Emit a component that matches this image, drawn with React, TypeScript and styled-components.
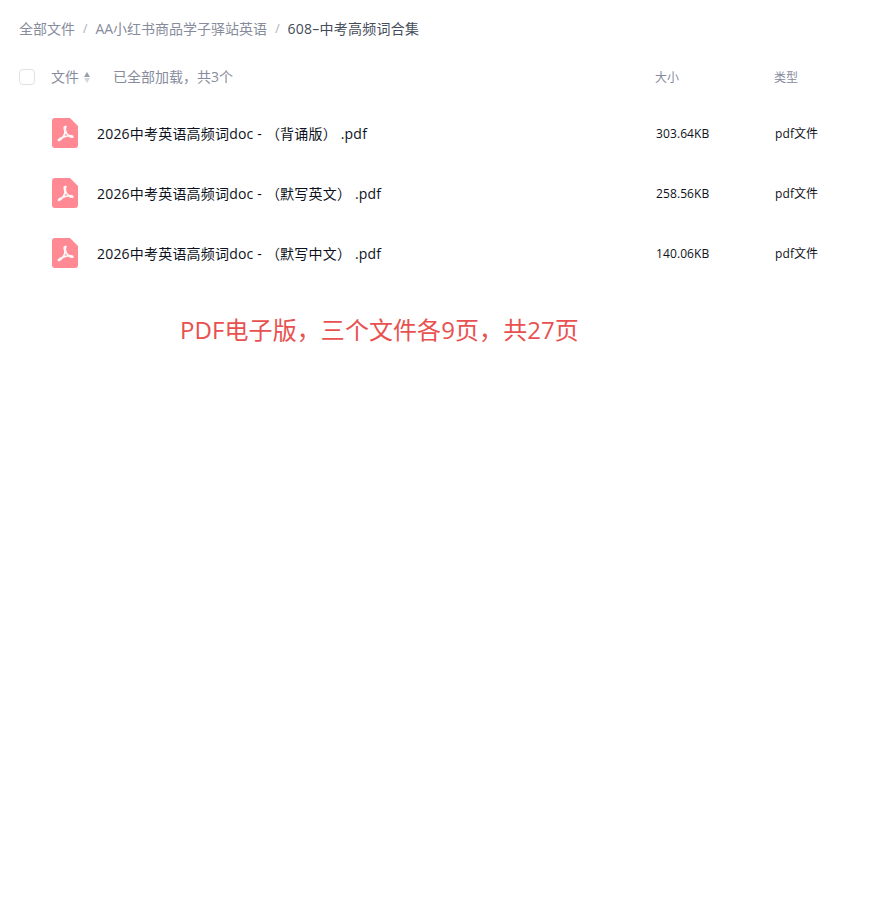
import React from 'react'
import styled, { createGlobalStyle } from 'styled-components'

const files = [
  { name: '2026中考英语高频词doc - （背诵版） .pdf', size: '303.64KB' },
  { name: '2026中考英语高频词doc - （默写英文） .pdf', size: '258.56KB' },
  { name: '2026中考英语高频词doc - （默写中文） .pdf', size: '140.06KB' }
]

const PdfIcon = () => (
  <svg width="26" height="30" viewBox="0 0 26 30">
    <path d="M3 0H18L26 8V27a3 3 0 0 1-3 3H3a3 3 0 0 1-3-3V3a3 3 0 0 1 3-3Z" fill="#ff8a94" />
    <path
      d="M13 8.500c-.9 0-1 1.400-.2 4.200.4 1.300.3 2.100-.4 3.700-1 2.200-2 3.700-3.300 4.800-1 .8-2.300 1.700-2.600 1.100-.3-.6 1-1.500 3-2.400 2.200-1 5.400-2 7.600-2.200 1.800-.1 3.900.3 3.800 1.100-.1.800-2.100.500-3.600-.5-1.700-1.200-3.100-3-3.700-5.200-.5-2-.2-4.600.4-4.600Z"
      fill="none"
      stroke="#fff"
      strokeWidth="1.700"
      strokeLinejoin="round"
      opacity="0.92"
    />
  </svg>
)

const App = () => (
  <Page>
    <GlobalStyle />
    <Breadcrumb>
      <Crumb>全部文件</Crumb>
      <Separator>/</Separator>
      <Crumb>AA小红书商品学子驿站英语</Crumb>
      <Separator>/</Separator>
      <Crumb $current>608–中考高频词合集</Crumb>
    </Breadcrumb>

    <HeaderRow>
      <Checkbox />
      <NameHead>
        <NameLabel>文件</NameLabel>
        <SortIcon>
          <SortUp />
          <SortDown />
        </SortIcon>
        <LoadedText>已全部加载，共3个</LoadedText>
      </NameHead>
      <HeadLabel>大小</HeadLabel>
      <HeadLabel>类型</HeadLabel>
    </HeaderRow>

    <FileList>
      {files.map((file) => (
        <FileRow key={file.name}>
          <IconCell>
            <PdfIcon />
          </IconCell>
          <FileName>{file.name}</FileName>
          <MetaCell>{file.size}</MetaCell>
          <MetaCell>pdf文件</MetaCell>
        </FileRow>
      ))}
    </FileList>

    <Note>PDF电子版，三个文件各9页，共27页</Note>
  </Page>
)

const GlobalStyle = createGlobalStyle`
  html, body {
    margin: 0;
    padding: 0;
    background: #fff;
  }
`

const Page = styled.div`
  width: 872px;
  height: 909px;
  padding: 19px 0 0 19px;
  box-sizing: border-box;
  font-family: "Open Sans", "Noto Sans CJK SC", sans-serif;
`

const Breadcrumb = styled.div`
  display: flex;
  align-items: center;
  height: 20px;
  font-size: 14px;
  line-height: 20px;
`

const Crumb = styled.span<{ $current?: boolean }>`
  color: ${(p) => (p.$current ? '#454d5a' : '#878c9c')};
  letter-spacing: ${(p) => (p.$current ? '0.25px' : '0')};
`

const Separator = styled.span`
  margin: 0 8px;
  font-size: 12px;
  color: #a8acb8;
`

const HeaderRow = styled.div`
  display: grid;
  grid-template-columns: 32px 604px 119px 1fr;
  align-items: center;
  height: 20px;
  margin-top: 28px;
`

const Checkbox = styled.div`
  width: 16px;
  height: 16px;
  border: 1px solid #dfe1e6;
  border-radius: 4px;
  box-sizing: border-box;
`

const NameHead = styled.div`
  display: flex;
  align-items: center;
`

const HeadLabel = styled.span`
  padding-top: 2px;
  font-size: 12px;
  line-height: 18px;
  color: #878c9c;
`

const NameLabel = styled.span`
  font-size: 14px;
  line-height: 18px;
  color: #878c9c;
`

const SortIcon = styled.span`
  display: flex;
  flex-direction: column;
  gap: 1px;
  margin-left: 5px;
`

const SortUp = styled.i`
  width: 0;
  height: 0;
  border-left: 3px solid transparent;
  border-right: 3px solid transparent;
  border-bottom: 5px solid #9a9eab;
`

const SortDown = styled.i`
  width: 0;
  height: 0;
  border-left: 3px solid transparent;
  border-right: 3px solid transparent;
  border-top: 5px solid #d5d7de;
`

const LoadedText = styled.span`
  margin-left: 23px;
  font-size: 14px;
  line-height: 18px;
  color: #878c9c;
`

const FileList = styled.div`
  margin-top: 16px;
`

const FileRow = styled.div`
  display: grid;
  grid-template-columns: 78px 559px 119px 1fr;
  align-items: center;
  height: 60px;
`

const IconCell = styled.div`
  display: flex;
  padding-left: 33px;
`

const FileName = styled.span`
  padding-top: 2px;
  font-size: 14px;
  line-height: 20px;
  letter-spacing: 0.2px;
  color: #0d1220;
`

const MetaCell = styled.span`
  padding-top: 2px;
  font-size: 12px;
  line-height: 18px;
  letter-spacing: 0.1px;
  color: #0d1220;
`

const Note = styled.div`
  margin: 30px 0 0 161px;
  font-size: 24px;
  line-height: 34px;
  letter-spacing: 0.08px;
  color: #e8514f;
`

export default App
